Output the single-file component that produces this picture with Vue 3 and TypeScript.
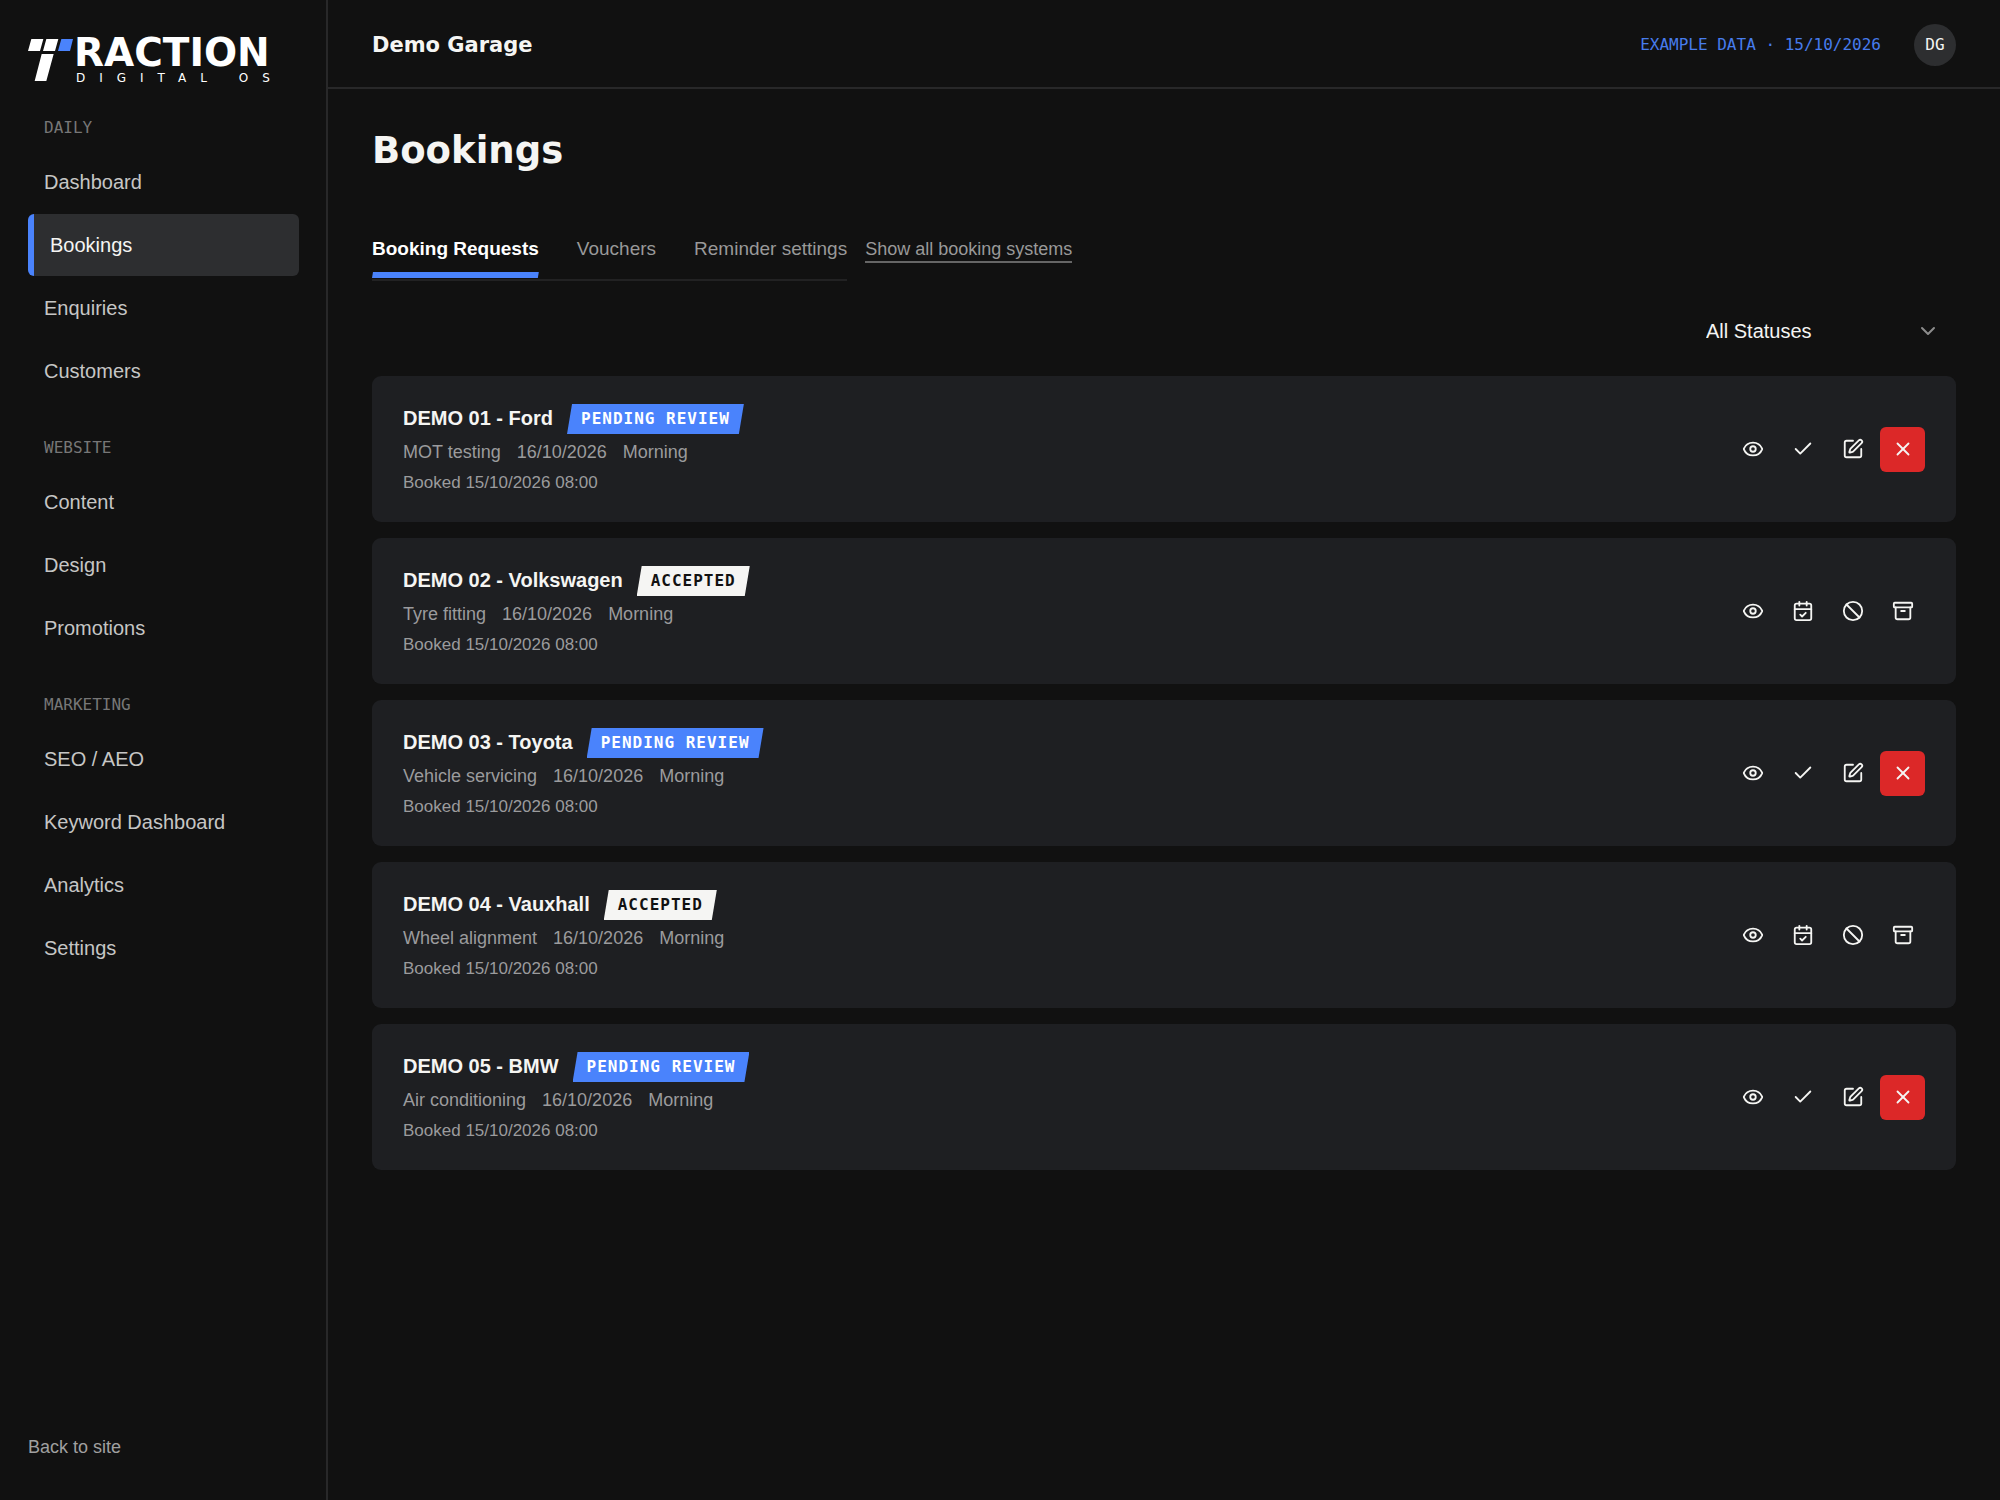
<script setup lang="ts">
import { ref, computed } from 'vue'

type Status = 'pending' | 'accepted'
type IconName = 'eye' | 'check' | 'edit' | 'close' | 'calendar' | 'ban' | 'archive'

interface Booking {
  id: number
  title: string
  service: string
  date: string
  slot: string
  booked: string
  status: Status
}

interface Action {
  icon: IconName
  label: string
  danger?: boolean
}

const navGroups: { label: string; items: string[] }[] = [
  { label: 'DAILY', items: ['Dashboard', 'Bookings', 'Enquiries', 'Customers'] },
  { label: 'WEBSITE', items: ['Content', 'Design', 'Promotions'] },
  { label: 'MARKETING', items: ['SEO / AEO', 'Keyword Dashboard', 'Analytics', 'Settings'] },
]
const currentPage = 'Bookings'

const tabs = ['Booking Requests', 'Vouchers', 'Reminder settings']
const activeTab = ref(tabs[0])

const statusLabels: Record<Status, string> = {
  pending: 'PENDING REVIEW',
  accepted: 'ACCEPTED',
}

const statusActions: Record<Status, Action[]> = {
  pending: [
    { icon: 'eye', label: 'View' },
    { icon: 'check', label: 'Accept' },
    { icon: 'edit', label: 'Edit' },
    { icon: 'close', label: 'Decline', danger: true },
  ],
  accepted: [
    { icon: 'eye', label: 'View' },
    { icon: 'calendar', label: 'Complete' },
    { icon: 'ban', label: 'Cancel' },
    { icon: 'archive', label: 'Archive' },
  ],
}

const icons: Record<IconName, string[]> = {
  eye: [
    'M2.062 12.348a1 1 0 0 1 0-.696 10.75 10.75 0 0 1 19.876 0 1 1 0 0 1 0 .696 10.75 10.75 0 0 1-19.876 0',
    'M15 12a3 3 0 1 1-6 0 3 3 0 0 1 6 0z',
  ],
  check: ['M20 6 9 17l-5-5'],
  edit: [
    'M12 3H5a2 2 0 0 0-2 2v14a2 2 0 0 0 2 2h14a2 2 0 0 0 2-2v-7',
    'M18.375 2.625a1 1 0 0 1 3 3l-9.013 9.014a2 2 0 0 1-.853.505l-2.873.84a.5.5 0 0 1-.62-.62l.84-2.873a2 2 0 0 1 .506-.852z',
  ],
  close: ['M18 6 6 18', 'm6 6 12 12'],
  calendar: [
    'M8 2v4',
    'M16 2v4',
    'M5 4h14a2 2 0 0 1 2 2v14a2 2 0 0 1-2 2H5a2 2 0 0 1-2-2V6a2 2 0 0 1 2-2z',
    'M3 10h18',
    'm9 16 2 2 4-4',
  ],
  ban: ['M22 12a10 10 0 1 1-20 0 10 10 0 0 1 20 0z', 'm4.9 4.9 14.2 14.2'],
  archive: [
    'M3 3h18a1 1 0 0 1 1 1v3a1 1 0 0 1-1 1H3a1 1 0 0 1-1-1V4a1 1 0 0 1 1-1z',
    'M4 8v11a2 2 0 0 0 2 2h12a2 2 0 0 0 2-2V8',
    'M10 12h4',
  ],
}

const makeBooking = (id: number, make: string, service: string, status: Status): Booking => ({
  id,
  title: `DEMO 0${id} - ${make}`,
  service,
  date: '16/10/2026',
  slot: 'Morning',
  booked: 'Booked 15/10/2026 08:00',
  status,
})

const bookings: Booking[] = [
  makeBooking(1, 'Ford', 'MOT testing', 'pending'),
  makeBooking(2, 'Volkswagen', 'Tyre fitting', 'accepted'),
  makeBooking(3, 'Toyota', 'Vehicle servicing', 'pending'),
  makeBooking(4, 'Vauxhall', 'Wheel alignment', 'accepted'),
  makeBooking(5, 'BMW', 'Air conditioning', 'pending'),
]

const filter = ref<'all' | Status>('all')
const visible = computed(() =>
  bookings.filter((b) => filter.value === 'all' || b.status === filter.value),
)
</script>

<template>
  <div class="app">
    <aside class="sidebar">
      <div class="logo">
        <svg class="mark" viewBox="0 0 135 126" aria-hidden="true">
          <path class="mark-light" d="M10 0H46L36 36H0zM55 0H91L81 36H45zM41 45H77L55 126H20z" />
          <path class="mark-blue" d="M100 0H135L126 36H90z" />
        </svg>
        <div class="wordmark">
          <span class="word">RACTION</span>
          <span class="tagline">DIGITAL OS</span>
        </div>
      </div>

      <nav class="nav" aria-label="Main">
        <section v-for="group in navGroups" :key="group.label" class="nav-group">
          <h2 class="nav-label">{{ group.label }}</h2>
          <a
            v-for="item in group.items"
            :key="item"
            href="#"
            class="nav-item"
            :class="{ active: item === currentPage }"
            :aria-current="item === currentPage ? 'page' : undefined"
            >{{ item }}</a
          >
        </section>
      </nav>

      <a href="#" class="back">Back to site</a>
    </aside>

    <div class="body">
      <header class="topbar">
        <span class="garage">Demo Garage</span>
        <span class="example">EXAMPLE DATA · 15/10/2026</span>
        <span class="avatar">DG</span>
      </header>

      <main class="content">
        <h1 class="title">Bookings</h1>

        <div class="tab-row">
          <div class="tabs" role="tablist">
            <button
              v-for="tab in tabs"
              :key="tab"
              type="button"
              role="tab"
              class="tab"
              :class="{ active: tab === activeTab }"
              :aria-selected="tab === activeTab"
              @click="activeTab = tab"
            >
              {{ tab }}
            </button>
          </div>
          <a href="#" class="show-all">Show all booking systems</a>
        </div>

        <div class="filter">
          <select v-model="filter" class="filter-select" aria-label="Status">
            <option value="all">All Statuses</option>
            <option value="pending">Pending review</option>
            <option value="accepted">Accepted</option>
          </select>
          <svg class="chevron" viewBox="0 0 24 24" aria-hidden="true"><path d="m6 9 6 6 6-6" /></svg>
        </div>

        <ul class="cards">
          <li v-for="b in visible" :key="b.id" class="card">
            <div class="info">
              <div class="heading">
                <h3 class="name">{{ b.title }}</h3>
                <span class="badge" :class="b.status">{{ statusLabels[b.status] }}</span>
              </div>
              <div class="meta">
                <span>{{ b.service }}</span>
                <span>{{ b.date }}</span>
                <span>{{ b.slot }}</span>
              </div>
              <div class="booked">{{ b.booked }}</div>
            </div>
            <div class="actions">
              <button
                v-for="a in statusActions[b.status]"
                :key="a.icon"
                type="button"
                class="action"
                :class="{ danger: a.danger }"
                :aria-label="a.label"
              >
                <svg class="icon" viewBox="0 0 24 24" aria-hidden="true">
                  <path v-for="d in icons[a.icon]" :key="d" :d="d" />
                </svg>
              </button>
            </div>
          </li>
        </ul>
      </main>
    </div>
  </div>
</template>

<style>
body {
  background: #111111;
}
</style>

<style scoped>
.app {
  display: flex;
  min-height: 100vh;
  background: #111111;
  color: #f5f5f3;
  font-family: 'Liberation Sans', Arial, sans-serif;
  font-size: 20px;
}

a {
  color: inherit;
  text-decoration: none;
}

button {
  padding: 0;
  border: 0;
  background: none;
  color: inherit;
  font: inherit;
  cursor: pointer;
}

h1,
h2,
h3,
ul {
  margin: 0;
  padding: 0;
}

/* Sidebar */
.sidebar {
  box-sizing: border-box;
  flex: 0 0 328px;
  display: flex;
  flex-direction: column;
  padding: 38px 27px 39px 28px;
  border-right: 2px solid #282829;
}

.logo {
  display: flex;
  align-items: flex-start;
  gap: 1px;
  height: 46px;
  margin-bottom: 32px;
  color: #ffffff;
  font-family: 'DejaVu Sans', sans-serif;
}

.mark {
  width: 45px;
  height: 42px;
  margin-top: 1px;
}

.mark-light {
  fill: #ffffff;
}

.mark-blue {
  fill: #4a83fc;
}

.wordmark {
  display: flex;
  flex-direction: column;
}

.word {
  font-size: 39px;
  font-weight: 700;
  line-height: 30px;
}

.tagline {
  padding-left: 2px;
  font-size: 12px;
  line-height: 20px;
  letter-spacing: 14px;
  white-space: nowrap;
}

.nav {
  display: flex;
  flex-direction: column;
  gap: 34px;
}

.nav-group {
  display: flex;
  flex-direction: column;
  gap: 1px;
}

.nav-label {
  margin-bottom: 10px;
  padding-left: 16px;
  color: #777777;
  font-family: 'DejaVu Sans Mono', monospace;
  font-size: 16px;
  font-weight: 400;
  line-height: 24px;
}

.nav-item {
  padding-left: 16px;
  border-radius: 6px;
  color: #c6c6c5;
  line-height: 62px;
}

.nav-item.active {
  border-left: 6px solid #4a83fc;
  background: #2d2e30;
  color: #f5f5f3;
}

.back {
  margin-top: auto;
  color: #a0a0a0;
  font-size: 18px;
  line-height: 28px;
}

/* Top bar */
.body {
  flex: 1;
  min-width: 0;
}

.topbar {
  box-sizing: border-box;
  display: flex;
  align-items: center;
  height: 89px;
  padding: 2px 44px 0;
  border-bottom: 2px solid #282829;
}

.garage {
  font-family: 'DejaVu Sans', sans-serif;
  font-size: 21px;
  font-weight: 700;
}

.example {
  margin-left: auto;
  color: #477cec;
  font-family: 'DejaVu Sans Mono', monospace;
  font-size: 16px;
}

.avatar {
  width: 42px;
  margin-left: 33px;
  border-radius: 50%;
  background: #2d2e30;
  font-family: 'DejaVu Sans Mono', monospace;
  font-size: 16px;
  line-height: 42px;
  text-align: center;
}

/* Content */
.content {
  padding: 38px 44px;
}

.title {
  font-family: 'DejaVu Sans', sans-serif;
  font-size: 37px;
  font-weight: 700;
  line-height: 48px;
}

.tab-row {
  display: flex;
  align-items: flex-start;
  gap: 18px;
  margin-top: 56px;
}

.tabs {
  display: flex;
  gap: 38px;
  border-bottom: 2px solid #222223;
}

.tab {
  padding-bottom: 1px;
  color: #999999;
  font-size: 19px;
  line-height: 36px;
}

.tab::after {
  content: '';
  display: block;
  height: 6px;
  margin-top: 5px;
  clip-path: polygon(1px 0, 100% 0, calc(100% - 1px) 100%, 0 100%);
}

.tab.active {
  color: #ffffff;
  font-weight: 700;
}

.tab.active::after {
  background: #4a83fc;
}

.show-all {
  margin-top: 6px;
  border-bottom: 2px solid #666666;
  color: #999999;
  font-size: 18px;
  line-height: 24px;
}

.filter {
  display: grid;
  width: 270px;
  margin: 25px 0 20px auto;
}

.filter-select {
  grid-area: 1 / 1;
  height: 50px;
  padding: 0 20px;
  border: 0;
  background: transparent;
  color: #f5f5f3;
  font: inherit;
  appearance: none;
}

.filter-select option {
  background: #1e1f22;
}

.chevron {
  grid-area: 1 / 1;
  place-self: center end;
  width: 24px;
  height: 24px;
  margin-right: 16px;
  fill: none;
  stroke: #8c8c8c;
  stroke-width: 2;
  stroke-linecap: round;
  stroke-linejoin: round;
  pointer-events: none;
}

.cards {
  display: flex;
  flex-direction: column;
  gap: 16px;
  list-style: none;
}

.card {
  display: flex;
  align-items: center;
  justify-content: space-between;
  padding: 0 31px;
  border-radius: 9px;
  background: #1e1f22;
}

.info {
  display: flex;
  flex-direction: column;
  gap: 4px;
  padding: 28px 0 26px;
}

.heading {
  display: flex;
  align-items: flex-start;
  gap: 14px;
}

.name {
  font-size: 20px;
  font-weight: 700;
  line-height: 28px;
}

.badge {
  padding: 0 14px;
  clip-path: polygon(5px 0, 100% 0, calc(100% - 5px) 100%, 0 100%);
  font-family: 'DejaVu Sans Mono', monospace;
  font-size: 16px;
  font-weight: 700;
  line-height: 30px;
  letter-spacing: 1px;
}

.badge.pending {
  background: #4a83fc;
  color: #ffffff;
}

.badge.accepted {
  background: #f5f5f3;
  color: #111111;
}

.meta {
  display: flex;
  gap: 16px;
  color: #9b9b9d;
  font-size: 18px;
  line-height: 28px;
}

.booked {
  color: #9b9b9d;
  font-size: 17px;
  line-height: 26px;
}

.actions {
  display: flex;
  gap: 5px;
}

.action {
  display: grid;
  place-items: center;
  width: 45px;
  height: 45px;
  border-radius: 6px;
}

.action.danger {
  background: #dc2828;
}

.icon {
  width: 22px;
  height: 22px;
  fill: none;
  stroke: #f5f5f3;
  stroke-width: 2;
  stroke-linecap: round;
  stroke-linejoin: round;
}
</style>
